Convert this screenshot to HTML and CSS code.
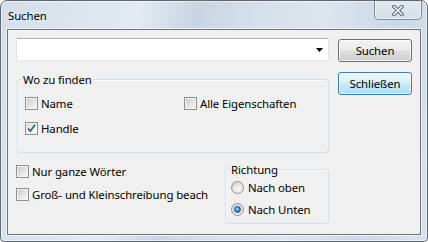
FILE: index.html
```html
<!DOCTYPE html>
<html lang="de">
<head>
<meta charset="utf-8">
<title>Suchen</title>
<link rel="stylesheet" href="styles.css">
</head>
<body>
<div class="window">
  <div class="titlebar">
    <span class="title">Suchen</span>
    <div class="close">
      <svg width="12" height="11" viewBox="0 0 12 11">
        <path d="M2 1.5 L10 9.5 M10 1.5 L2 9.5" stroke="#56606b" stroke-width="3.6" stroke-linecap="square" fill="none"/>
        <path d="M2 1.5 L10 9.5 M10 1.5 L2 9.5" stroke="#f6f8fa" stroke-width="1.6" stroke-linecap="square" fill="none"/>
      </svg>
    </div>
  </div>
  <div class="client">
    <div class="left">
      <div class="combo">
        <svg class="arrow" width="7" height="4" viewBox="0 0 7 4"><path d="M0 0 H7 L3.5 4 Z" fill="#000"/></svg>
      </div>
      <fieldset class="group where">
        <legend>Wo zu finden</legend>
        <div class="grid">
          <label class="check"><span class="box"></span>Name</label>
          <label class="check"><span class="box"></span>Alle Eigenschaften</label>
          <label class="check"><span class="box checked"><svg width="11" height="11" viewBox="0 0 11 11"><path d="M2 5.5 L4.3 8.2 L9 1.8" stroke="#3d5596" stroke-width="1.7" fill="none"/></svg></span>Handle</label>
        </div>
      </fieldset>
      <div class="lower">
        <div class="opts">
          <label class="check"><span class="box"></span>Nur ganze Wörter</label>
          <label class="check"><span class="box"></span>Groß- und Kleinschreibung beach</label>
        </div>
        <fieldset class="group dir">
          <legend>Richtung</legend>
          <label class="radio-row"><span class="radio"></span>Nach oben</label>
          <label class="radio-row"><span class="radio on"></span>Nach Unten</label>
        </fieldset>
      </div>
    </div>
    <div class="buttons">
      <div class="btn">Suchen</div>
      <div class="btn default">Schließen</div>
    </div>
  </div>
</div>
</body>
</html>
```
FILE: styles.css
```css
html, body {
  margin: 0;
  padding: 0;
  background: #ffffff;
}
body {
  font-family: "Noto Sans", "Open Sans", sans-serif;
  font-size: 11.4px;
  letter-spacing: -0.1px;
  color: #000;
}
.window {
  position: relative;
  box-sizing: border-box;
  width: 428px;
  height: 242px;
  border: 1px solid #5f6872;
  border-radius: 7px 7px 4px 4px;
  background: linear-gradient(100deg, #d4dee9 0%, #dfe7ef 22%, #e3eaf1 30%, #c9d5e2 42%, #d6e0ea 55%, #dde5ee 70%, #ccd8e5 85%, #d9e2ec 100%);
  box-shadow: inset 0 0 0 1px rgba(255,255,255,0.55);
  display: flex;
  flex-direction: column;
}
.titlebar {
  height: 28px;
  flex: none;
  padding-left: 7px;
  box-sizing: border-box;
  padding-top: 7px;
}
.title {
  line-height: 15px;
  text-shadow: 0 0 6px rgba(255,255,255,0.9);
}
.close {
  position: absolute;
  top: 0;
  right: 5px;
  width: 48px;
  height: 19px;
  box-sizing: border-box;
  border: 1px solid #7f8b99;
  border-top: none;
  border-radius: 0 0 5px 5px;
  background: linear-gradient(#e3e9f0, #d5dee8);
  box-shadow: inset 0 -1px 0 rgba(255,255,255,0.6), inset 1px 0 0 rgba(255,255,255,0.5), inset -1px 0 0 rgba(255,255,255,0.5);
  display: flex;
  align-items: center;
  justify-content: center;
}
.client {
  flex: 1;
  margin: 0 6px 6px 6px;
  border: 1px solid #6a7480;
  box-shadow: 0 0 0 1px #eef2f6;
  background: #f0f0f0;
  display: flex;
  padding: 8px 8px 0 8px;
}
.left {
  width: 313px;
  flex: none;
  display: flex;
  flex-direction: column;
}
.combo {
  box-sizing: border-box;
  height: 23px;
  background: #fff;
  border: 1px solid #e2e3ea;
  border-top-color: #abadb3;
  border-bottom-color: #e3e9ef;
  border-radius: 2px;
  display: flex;
  align-items: center;
  justify-content: flex-end;
  padding-right: 5px;
}
.arrow { display: block; margin-top: 1px; }
.group {
  margin: 0;
  border: 1px solid #d5dfe5;
  border-radius: 3px;
  box-shadow: inset 1px 1px 0 #fafcfd;
  padding: 0;
  min-width: 0;
}
.group legend {
  margin-left: 4px;
  padding: 0 1px;
  line-height: 15px;
}
.where {
  margin-top: 11px;
  margin-left: 1px;
  padding: 10px 0 17px 0;
}
.grid {
  display: grid;
  grid-template-columns: 159px 1fr;
  row-gap: 12px;
  padding-left: 7px;
}
.check {
  display: flex;
  align-items: center;
  height: 13px;
  line-height: 13px;
  white-space: nowrap;
}
.box {
  flex: none;
  box-sizing: border-box;
  width: 13px;
  height: 13px;
  margin-right: 3px;
  border: 1px solid #8e8f8f;
  box-shadow: inset 0 0 0 1px #f3f3f3;
  background: linear-gradient(135deg, #c4c8cd 0%, #dadcde 40%, #f2f2f2 80%, #fbfbfb 100%);
  display: flex;
  align-items: center;
  justify-content: center;
}
.box.checked {
  background: linear-gradient(135deg, #d6d9de 0%, #eceef0 50%, #fafafa 100%);
}
.box svg { display: block; }
.lower {
  display: flex;
  justify-content: space-between;
  margin-top: 9px;
}
.opts {
  display: flex;
  flex-direction: column;
  row-gap: 10px;
  padding-top: 3px;
}
.dir {
  width: 104px;
  box-sizing: border-box;
  padding: 4px 0 7px 0;
  display: flex;
  flex-direction: column;
  row-gap: 9px;
}
.radio-row {
  display: flex;
  align-items: center;
  height: 13px;
  line-height: 13px;
  white-space: nowrap;
  margin-left: 5px;
}
.radio {
  flex: none;
  box-sizing: border-box;
  width: 13px;
  height: 13px;
  margin-right: 4px;
  border-radius: 50%;
  border: 1px solid #8f9194;
  background: radial-gradient(circle at 60% 65%, #fbfbfb 0%, #e6e6e6 45%, #c9cbcd 100%);
  display: flex;
  align-items: center;
  justify-content: center;
}
.radio.on::after {
  content: "";
  width: 7px;
  height: 7px;
  box-sizing: border-box;
  border-radius: 50%;
  border: 1px solid #1a4a7c;
  background: radial-gradient(circle at 40% 35%, #a6e0ff 0%, #3d9be0 40%, #125fa8 100%);
}
.buttons {
  margin-left: 9px;
  width: 74px;
  flex: none;
  display: flex;
  flex-direction: column;
  row-gap: 10px;
  padding-top: 1px;
}
.btn {
  box-sizing: border-box;
  height: 23px;
  border: 1px solid #707070;
  border-radius: 3px;
  background: linear-gradient(#f2f2f2 0%, #ebebeb 48%, #dddddd 52%, #cfcfcf 100%);
  box-shadow: inset 0 0 0 1px rgba(255,255,255,0.7);
  display: flex;
  align-items: center;
  justify-content: center;
  line-height: 15px;
}
.btn.default {
  border-color: #3c7fb1;
  background: linear-gradient(#eaf6fd 0%, #dcf1fc 45%, #c6e8fa 52%, #b3dff8 100%);
  box-shadow: inset 0 0 0 1px rgba(255,255,255,0.55);
}
```
